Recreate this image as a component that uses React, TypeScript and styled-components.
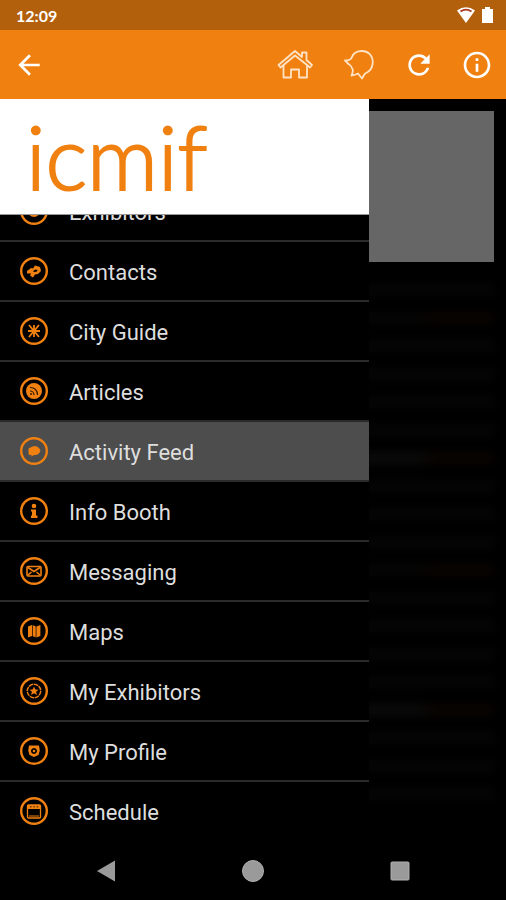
import React from 'react'
import styled, { createGlobalStyle } from 'styled-components'
import { MdArrowBack, MdOutlineInfo, MdRefresh } from 'react-icons/md'

const GlobalStyle = createGlobalStyle`
  * {
    box-sizing: border-box;
  }
  body {
    margin: 0;
    background: #000;
    font-family: Roboto, 'Liberation Sans', sans-serif;
  }
`

const orange = '#f08010'

// glyphs sit in the middle of a 28x28 ring
const glyphs = {
  exhibitors: (
    <>
      <circle cx="14" cy="14" r="5" fill="none" stroke={orange} strokeWidth="2" />
      <path d="M10 14h8l-4 5z" />
    </>
  ),
  contacts: (
    <path
      d="M7 14l4-3 2 .5 2-3 5 1.500 1 4-3 3-3 .5-2 3-3-2 1-2-4 0zM13 14l1 1 3-.5.5-1.500-2-.5z"
      fillRule="evenodd"
    />
  ),
  cityGuide: (
    <path
      d="M14 8v12M8 14h12M9 8l5 6 5-6M9 20l5-6 5 6"
      fill="none"
      stroke={orange}
      strokeWidth="1.800"
    />
  ),
  articles: (
    <>
      <circle cx="14" cy="14" r="8" />
      <g fill="none" stroke="#3a1c00" strokeWidth="1.200">
        <path d="M10 10.500a7 7 0 0 1 7.500 7.500M10 14a4 4 0 0 1 4 4" />
      </g>
      <circle cx="11" cy="17" r="1" fill="#3a1c00" />
    </>
  ),
  activity: <path d="M8.500 12q0-1.500 2-1.500q1.500-1.500 4.500-1.500 4 .5 5.500 4.500-1.500 4.500-5.500 4.500h-1l-2.500 1.500v-1.500h-1q-2 0-2-1.500z" />,
  info: (
    <>
      <circle cx="14" cy="9" r="2.300" />
      <path d="M11 12.500h5v6h1.500v2.500h-6.500v-2.500h1v-4h-1z" />
    </>
  ),
  messaging: (
    <g fill="none" stroke={orange} strokeWidth="1.600">
      <rect x="7" y="9.500" width="14" height="9.500" rx="1" />
      <path d="M8 10.500l6 4 6-4M8 18l3.500-3M20 18l-3.500-3" />
    </g>
  ),
  maps: <path d="M8 9.500l4-1.500v11l-4 1.500zM12.700 8l3 1.500v11l-3-1.500zM16.400 9.500l4-1.500v11l-4 1.500z" />,
  myExhibitors: (
    <>
      <circle cx="14" cy="14" r="6.700" fill="none" stroke={orange} strokeWidth="1.500" strokeDasharray="4.500 .7" />
      <path d="M14 9.500l1.300 3 3.200.2-2.400 2.100.8 3.200-2.900-1.700-2.900 1.700.8-3.200-2.400-2.100 3.200-.2z" />
    </>
  ),
  profile: (
    <>
      <path
        d="M9 8.500h10l.8 5-1.300 4.500-4.500 2-4.500-2-1.300-4.500zM14 11a3 3 0 1 0 .01 0z"
        fillRule="evenodd"
      />
      <circle cx="14" cy="14" r="1.300" />
    </>
  ),
  schedule: (
    <>
      <rect x="7.500" y="8" width="13" height="13" rx="1" fill="none" stroke={orange} strokeWidth="1.300" />
      <path d="M7 8h14v4h-14z" />
      <path d="M10 9.800h1.500M13.300 9.800h1.500M16.600 9.800h1.500" stroke="#3a1c00" />
      <path d="M9 19h10" stroke={orange} />
    </>
  ),
}

type Item = { label: string; icon: keyof typeof glyphs; active?: boolean }

const items: Item[] = [
  { label: 'Exhibitors', icon: 'exhibitors' },
  { label: 'Contacts', icon: 'contacts' },
  { label: 'City Guide', icon: 'cityGuide' },
  { label: 'Articles', icon: 'articles' },
  { label: 'Activity Feed', icon: 'activity', active: true },
  { label: 'Info Booth', icon: 'info' },
  { label: 'Messaging', icon: 'messaging' },
  { label: 'Maps', icon: 'maps' },
  { label: 'My Exhibitors', icon: 'myExhibitors' },
  { label: 'My Profile', icon: 'profile' },
  { label: 'Schedule', icon: 'schedule' },
]

// dimmed feed lines behind the drawer
const feedLines = Array.from({ length: 19 }, (_, i) => i % 9)

const App: React.FC = () => {
  return (
    <Screen>
      <GlobalStyle />
      <StatusBar>
        <span>12:09</span>
        <StatusIcons viewBox="0 0 38 18" aria-hidden="true">
          <path d="M1 4.500Q10 -2 19 4.500L10 17z" fill="#fff" />
          <path d="M4.500 5.500Q10 1.800 15.500 5.500" fill="none" stroke="#a83a20" strokeWidth="1.800" />
          <path d="M29 1h5v2h3v14h-11v-14h3z" fill="#fff" />
        </StatusIcons>
      </StatusBar>
      <AppBar>
        <IconButton aria-label="Back">
          <MdArrowBack size={32} />
        </IconButton>
        <Actions>
          <IconButton aria-label="Home">
            <svg width="40" height="36" viewBox="0 0 40 36" fill="none" stroke="#ffe3c4" strokeWidth="1.800" strokeLinejoin="round">
              <path d="M20 4l7 6V5.500h4.500V13l5.500 5-2 2.500-3-2.500v12.500h-8V22.500h-8v8H8.500V18l-3 2.500L3.500 18z" />
              <path d="M8.500 18L20 8.500 32 18" />
            </svg>
          </IconButton>
          <IconButton aria-label="Notifications">
            <svg width="36" height="36" viewBox="0 0 36 36" fill="none" stroke="#ffe3c4" strokeWidth="1.800" strokeLinejoin="round">
              <path d="M4 13.500Q10 13.500 11 10Q13.500 4 20.500 4Q26.500 4 29.500 8Q32.500 12 31.500 17.500Q30.500 23 26 25.500Q23.500 26.500 23 28L21 31.500L17 26.500Q14 28 10.500 28.500Q12.500 24 11.500 22Q10.500 18.500 7.500 17z" />
            </svg>
          </IconButton>
          <IconButton aria-label="Refresh">
            <MdRefresh size={32} />
          </IconButton>
          <IconButton aria-label="Info">
            <MdOutlineInfo size={32} />
          </IconButton>
        </Actions>
      </AppBar>
      <Main>
        <Content>
          <Banner />
          <Feed aria-hidden="true">
            {feedLines.map((kind, i) => (
              <FeedLine key={i} $accent={kind === 1 || kind === 6} $title={kind === 6} />
            ))}
          </Feed>
        </Content>
        <Drawer>
          <Logo>icmif</Logo>
          <Menu>
            {items.map((item) => (
              <MenuItem key={item.label}>
                <MenuLink href="#" $active={item.active}>
                  <svg width="28" height="28" viewBox="0 0 28 28" fill={orange} aria-hidden="true">
                    <circle cx="14" cy="14" r="12.800" fill="none" stroke={orange} strokeWidth="2.400" />
                    {glyphs[item.icon]}
                  </svg>
                  <MenuLabel>{item.label}</MenuLabel>
                </MenuLink>
              </MenuItem>
            ))}
          </Menu>
        </Drawer>
      </Main>
      <SystemNav>
        <NavButton aria-label="System back">
          <svg width="24" height="24" viewBox="0 0 24 24">
            <path d="M21 1.500v21L3 12z" />
          </svg>
        </NavButton>
        <NavButton aria-label="System home">
          <svg width="24" height="24" viewBox="0 0 24 24">
            <circle cx="12" cy="12" r="10.500" stroke="#b0b0b0" />
          </svg>
        </NavButton>
        <NavButton aria-label="Recent apps">
          <svg width="24" height="24" viewBox="0 0 24 24">
            <rect x="3" y="3" width="18" height="18" rx="1" stroke="#b0b0b0" />
          </svg>
        </NavButton>
      </SystemNav>
    </Screen>
  )
}

export default App

const Screen = styled.div`
  display: flex;
  flex-direction: column;
  height: 100vh;
  background: #000;
`

const StatusBar = styled.div`
  display: flex;
  align-items: center;
  justify-content: space-between;
  height: 30px;
  padding: 0 12px 0 16px;
  background: #b3600c;
  color: #fff;
  font-family: Lato, sans-serif;
  font-size: 16px;
  font-weight: 700;
`

const StatusIcons = styled.svg`
  width: 38px;
  height: 18px;
`

const AppBar = styled.header`
  display: flex;
  align-items: center;
  justify-content: space-between;
  height: 69px;
  padding: 0 13px;
  background: ${orange};
`

const Actions = styled.div`
  display: flex;
  align-items: center;
  gap: 26px;
`

const IconButton = styled.button`
  display: flex;
  padding: 0;
  border: 0;
  background: none;
  color: #fff;
  cursor: pointer;
`

const Main = styled.main`
  position: relative;
  flex: 1;
  min-height: 0;
  overflow: hidden;
`

const Content = styled.div`
  padding: 12px;
`

const Banner = styled.div`
  height: 151px;
  background: #666;
`

const Feed = styled.div`
  display: grid;
  gap: 16px;
  padding-top: 22px;
  filter: blur(4px);
`

const FeedLine = styled.div<{ $accent: boolean; $title: boolean }>`
  height: 12px;
  background: linear-gradient(
    to right,
    ${(p) => (p.$title ? '#0a0a0a' : '#050505')} 84%,
    ${(p) => (p.$accent ? '#090400' : '#050505')} 88%
  );
`

const Drawer = styled.nav`
  position: absolute;
  top: 0;
  bottom: 0;
  left: 0;
  display: flex;
  flex-direction: column;
  width: 73%;
  background: #000;
`

const Logo = styled.div`
  flex-shrink: 0;
  height: 116px;
  padding-left: 26px;
  border-bottom: 1px solid #999;
  background: #fff;
  color: ${orange};
  font-family: Lato, sans-serif;
  font-size: 88px;
  font-weight: 300;
  line-height: 114px;
  -webkit-text-stroke: 2px ${orange};
`

// scrolled to its end, so the first row is cut by the logo
const Menu = styled.ul`
  display: flex;
  flex: 1;
  flex-direction: column;
  justify-content: flex-end;
  min-height: 0;
  margin: 0;
  padding: 0;
  overflow: hidden;
  list-style: none;
`

const MenuItem = styled.li`
  flex-shrink: 0;
  height: 60px;
  border-bottom: 2px solid #2a2a2a;
  &:last-child {
    border-color: transparent;
  }
`

const MenuLink = styled.a<{ $active?: boolean }>`
  display: flex;
  align-items: center;
  gap: 21px;
  height: 100%;
  padding-left: 20px;
  background: ${(p) => (p.$active ? '#4d4d4d' : 'transparent')};
  color: #dedede;
  font-size: 22px;
  text-decoration: none;
`

const MenuLabel = styled.span`
  padding-top: 2px;
`

const SystemNav = styled.footer`
  display: grid;
  grid-template-columns: repeat(3, 1fr);
  height: 58px;
  padding: 0 32px;
  background: #000;
`

const NavButton = styled.button`
  display: flex;
  align-items: center;
  justify-content: center;
  padding: 0;
  border: 0;
  background: none;
  fill: #9a9a9a;
`
